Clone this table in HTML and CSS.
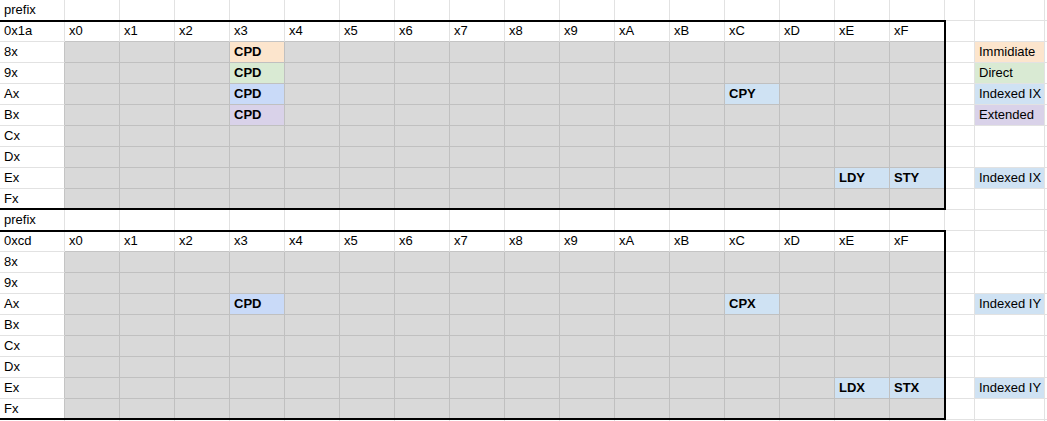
FILE: index.html
```html
<!DOCTYPE html>
<html>
<head>
<meta charset="utf-8">
<link rel="stylesheet" href="styles.css">
</head>
<body>
<div class="sheet">
  <div class="row"><div class="c">prefix</div><div class="c"></div><div class="c"></div><div class="c"></div><div class="c"></div><div class="c"></div><div class="c"></div><div class="c"></div><div class="c"></div><div class="c"></div><div class="c"></div><div class="c"></div><div class="c"></div><div class="c"></div><div class="c"></div><div class="c"></div><div class="c"></div><div class="c"></div><div class="c"></div><div class="c"></div></div>
  <div class="tbl">
    <div class="row hdr"><div class="c">0x1a</div><div class="c">x0</div><div class="c">x1</div><div class="c">x2</div><div class="c">x3</div><div class="c">x4</div><div class="c">x5</div><div class="c">x6</div><div class="c">x7</div><div class="c">x8</div><div class="c">x9</div><div class="c">xA</div><div class="c">xB</div><div class="c">xC</div><div class="c">xD</div><div class="c">xE</div><div class="c">xF</div><div class="c"></div><div class="c"></div><div class="c"></div></div>
    <div class="row data"><div class="c">8x</div><div class="c g"></div><div class="c g"></div><div class="c g"></div><div class="c op orange">CPD</div><div class="c g"></div><div class="c g"></div><div class="c g"></div><div class="c g"></div><div class="c g"></div><div class="c g"></div><div class="c g"></div><div class="c g"></div><div class="c g"></div><div class="c g"></div><div class="c g"></div><div class="c g"></div><div class="c"></div><div class="c orange">Immidiate</div><div class="c"></div></div>
    <div class="row data"><div class="c">9x</div><div class="c g"></div><div class="c g"></div><div class="c g"></div><div class="c op green">CPD</div><div class="c g"></div><div class="c g"></div><div class="c g"></div><div class="c g"></div><div class="c g"></div><div class="c g"></div><div class="c g"></div><div class="c g"></div><div class="c g"></div><div class="c g"></div><div class="c g"></div><div class="c g"></div><div class="c"></div><div class="c green">Direct</div><div class="c"></div></div>
    <div class="row data"><div class="c">Ax</div><div class="c g"></div><div class="c g"></div><div class="c g"></div><div class="c op blue">CPD</div><div class="c g"></div><div class="c g"></div><div class="c g"></div><div class="c g"></div><div class="c g"></div><div class="c g"></div><div class="c g"></div><div class="c g"></div><div class="c op lblue">CPY</div><div class="c g"></div><div class="c g"></div><div class="c g"></div><div class="c"></div><div class="c lblue">Indexed IX</div><div class="c"></div></div>
    <div class="row data"><div class="c">Bx</div><div class="c g"></div><div class="c g"></div><div class="c g"></div><div class="c op purple">CPD</div><div class="c g"></div><div class="c g"></div><div class="c g"></div><div class="c g"></div><div class="c g"></div><div class="c g"></div><div class="c g"></div><div class="c g"></div><div class="c g"></div><div class="c g"></div><div class="c g"></div><div class="c g"></div><div class="c"></div><div class="c purple">Extended</div><div class="c"></div></div>
    <div class="row data"><div class="c">Cx</div><div class="c g"></div><div class="c g"></div><div class="c g"></div><div class="c g"></div><div class="c g"></div><div class="c g"></div><div class="c g"></div><div class="c g"></div><div class="c g"></div><div class="c g"></div><div class="c g"></div><div class="c g"></div><div class="c g"></div><div class="c g"></div><div class="c g"></div><div class="c g"></div><div class="c"></div><div class="c"></div><div class="c"></div></div>
    <div class="row data"><div class="c">Dx</div><div class="c g"></div><div class="c g"></div><div class="c g"></div><div class="c g"></div><div class="c g"></div><div class="c g"></div><div class="c g"></div><div class="c g"></div><div class="c g"></div><div class="c g"></div><div class="c g"></div><div class="c g"></div><div class="c g"></div><div class="c g"></div><div class="c g"></div><div class="c g"></div><div class="c"></div><div class="c"></div><div class="c"></div></div>
    <div class="row data"><div class="c">Ex</div><div class="c g"></div><div class="c g"></div><div class="c g"></div><div class="c g"></div><div class="c g"></div><div class="c g"></div><div class="c g"></div><div class="c g"></div><div class="c g"></div><div class="c g"></div><div class="c g"></div><div class="c g"></div><div class="c g"></div><div class="c g"></div><div class="c op lblue">LDY</div><div class="c op lblue">STY</div><div class="c"></div><div class="c lblue">Indexed IX</div><div class="c"></div></div>
    <div class="row data"><div class="c">Fx</div><div class="c g"></div><div class="c g"></div><div class="c g"></div><div class="c g"></div><div class="c g"></div><div class="c g"></div><div class="c g"></div><div class="c g"></div><div class="c g"></div><div class="c g"></div><div class="c g"></div><div class="c g"></div><div class="c g"></div><div class="c g"></div><div class="c g"></div><div class="c g"></div><div class="c"></div><div class="c"></div><div class="c"></div></div>
  </div>
  <div class="row"><div class="c">prefix</div><div class="c"></div><div class="c"></div><div class="c"></div><div class="c"></div><div class="c"></div><div class="c"></div><div class="c"></div><div class="c"></div><div class="c"></div><div class="c"></div><div class="c"></div><div class="c"></div><div class="c"></div><div class="c"></div><div class="c"></div><div class="c"></div><div class="c"></div><div class="c"></div><div class="c"></div></div>
  <div class="tbl">
    <div class="row hdr"><div class="c">0xcd</div><div class="c">x0</div><div class="c">x1</div><div class="c">x2</div><div class="c">x3</div><div class="c">x4</div><div class="c">x5</div><div class="c">x6</div><div class="c">x7</div><div class="c">x8</div><div class="c">x9</div><div class="c">xA</div><div class="c">xB</div><div class="c">xC</div><div class="c">xD</div><div class="c">xE</div><div class="c">xF</div><div class="c"></div><div class="c"></div><div class="c"></div></div>
    <div class="row data"><div class="c">8x</div><div class="c g"></div><div class="c g"></div><div class="c g"></div><div class="c g"></div><div class="c g"></div><div class="c g"></div><div class="c g"></div><div class="c g"></div><div class="c g"></div><div class="c g"></div><div class="c g"></div><div class="c g"></div><div class="c g"></div><div class="c g"></div><div class="c g"></div><div class="c g"></div><div class="c"></div><div class="c"></div><div class="c"></div></div>
    <div class="row data"><div class="c">9x</div><div class="c g"></div><div class="c g"></div><div class="c g"></div><div class="c g"></div><div class="c g"></div><div class="c g"></div><div class="c g"></div><div class="c g"></div><div class="c g"></div><div class="c g"></div><div class="c g"></div><div class="c g"></div><div class="c g"></div><div class="c g"></div><div class="c g"></div><div class="c g"></div><div class="c"></div><div class="c"></div><div class="c"></div></div>
    <div class="row data"><div class="c">Ax</div><div class="c g"></div><div class="c g"></div><div class="c g"></div><div class="c op blue">CPD</div><div class="c g"></div><div class="c g"></div><div class="c g"></div><div class="c g"></div><div class="c g"></div><div class="c g"></div><div class="c g"></div><div class="c g"></div><div class="c op lblue">CPX</div><div class="c g"></div><div class="c g"></div><div class="c g"></div><div class="c"></div><div class="c lblue">Indexed IY</div><div class="c"></div></div>
    <div class="row data"><div class="c">Bx</div><div class="c g"></div><div class="c g"></div><div class="c g"></div><div class="c g"></div><div class="c g"></div><div class="c g"></div><div class="c g"></div><div class="c g"></div><div class="c g"></div><div class="c g"></div><div class="c g"></div><div class="c g"></div><div class="c g"></div><div class="c g"></div><div class="c g"></div><div class="c g"></div><div class="c"></div><div class="c"></div><div class="c"></div></div>
    <div class="row data"><div class="c">Cx</div><div class="c g"></div><div class="c g"></div><div class="c g"></div><div class="c g"></div><div class="c g"></div><div class="c g"></div><div class="c g"></div><div class="c g"></div><div class="c g"></div><div class="c g"></div><div class="c g"></div><div class="c g"></div><div class="c g"></div><div class="c g"></div><div class="c g"></div><div class="c g"></div><div class="c"></div><div class="c"></div><div class="c"></div></div>
    <div class="row data"><div class="c">Dx</div><div class="c g"></div><div class="c g"></div><div class="c g"></div><div class="c g"></div><div class="c g"></div><div class="c g"></div><div class="c g"></div><div class="c g"></div><div class="c g"></div><div class="c g"></div><div class="c g"></div><div class="c g"></div><div class="c g"></div><div class="c g"></div><div class="c g"></div><div class="c g"></div><div class="c"></div><div class="c"></div><div class="c"></div></div>
    <div class="row data"><div class="c">Ex</div><div class="c g"></div><div class="c g"></div><div class="c g"></div><div class="c g"></div><div class="c g"></div><div class="c g"></div><div class="c g"></div><div class="c g"></div><div class="c g"></div><div class="c g"></div><div class="c g"></div><div class="c g"></div><div class="c g"></div><div class="c g"></div><div class="c op lblue">LDX</div><div class="c op lblue">STX</div><div class="c"></div><div class="c lblue">Indexed IY</div><div class="c"></div></div>
    <div class="row data"><div class="c">Fx</div><div class="c g"></div><div class="c g"></div><div class="c g"></div><div class="c g"></div><div class="c g"></div><div class="c g"></div><div class="c g"></div><div class="c g"></div><div class="c g"></div><div class="c g"></div><div class="c g"></div><div class="c g"></div><div class="c g"></div><div class="c g"></div><div class="c g"></div><div class="c g"></div><div class="c"></div><div class="c"></div><div class="c"></div></div>
  </div>
  <div class="row"><div class="c"></div><div class="c"></div><div class="c"></div><div class="c"></div><div class="c"></div><div class="c"></div><div class="c"></div><div class="c"></div><div class="c"></div><div class="c"></div><div class="c"></div><div class="c"></div><div class="c"></div><div class="c"></div><div class="c"></div><div class="c"></div><div class="c"></div><div class="c"></div><div class="c"></div><div class="c"></div></div>
</div>
</body>
</html>
```

FILE: styles.css
```css
html, body {
  margin: 0;
  padding: 0;
  background: #ffffff;
}

body {
  font-family: "Liberation Sans", Arial, sans-serif;
  font-size: 13px;
  color: #000000;
  overflow: hidden;
}

.sheet {
  width: 1047px;
}

.row {
  display: grid;
  grid-template-columns: 65px repeat(16, 55px) 30px 70px 40px;
  height: 21px;
}

.c {
  box-sizing: border-box;
  height: 21px;
  line-height: 20px;
  padding-left: 4px;
  border-right: 1px solid #e2e2e2;
  border-bottom: 1px solid #e2e2e2;
  white-space: nowrap;
  overflow: hidden;
}

.tbl {
  position: relative;
}

.tbl::after {
  content: "";
  position: absolute;
  left: 0;
  top: -1px;
  width: 946px;
  height: calc(100% + 1px);
  box-sizing: border-box;
  border-top: 2px solid #000000;
  border-right: 2px solid #000000;
  border-bottom: 2px solid #000000;
  pointer-events: none;
}

.hdr .c:nth-child(n+2):nth-child(-n+17) {
  border-bottom-color: #c4c4c4;
}

.data .c:first-child {
  border-right-color: #c4c4c4;
}

.g {
  background: #d9d9d9;
  border-right-color: #c0c0c0;
  border-bottom-color: #c0c0c0;
}

.op {
  font-weight: bold;
  border-right-color: #c0c0c0;
  border-bottom-color: #c0c0c0;
}

.orange { background: #fce5cd; }
.green  { background: #d9ead3; }
.blue   { background: #c9daf8; }
.lblue  { background: #cfe2f3; }
.purple { background: #d9d2e9; }
```
